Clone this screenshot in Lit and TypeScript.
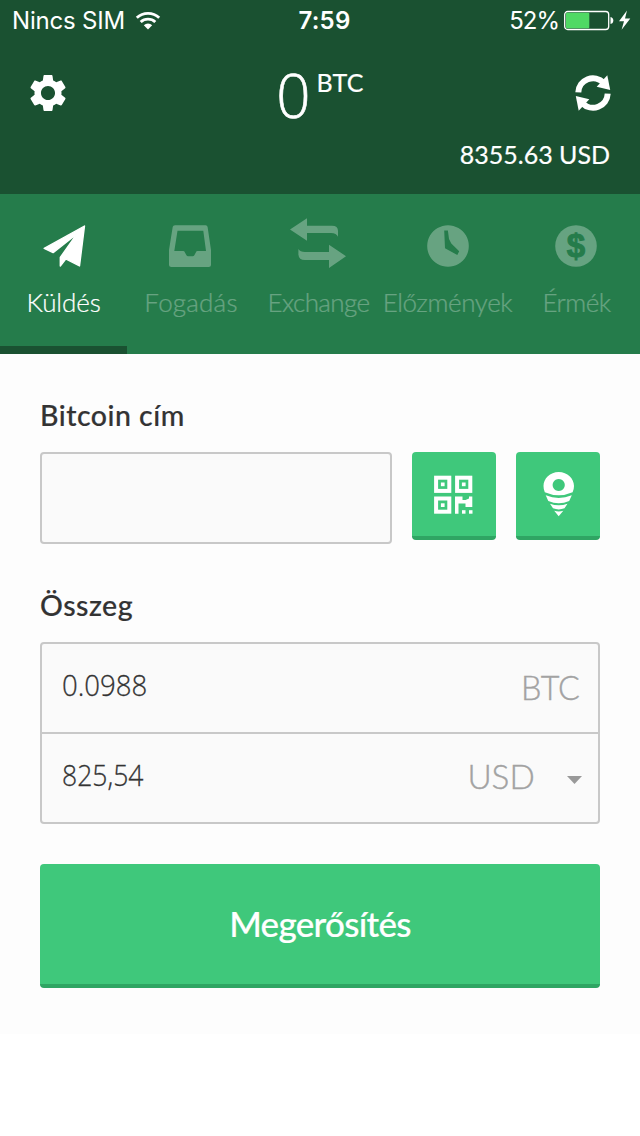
import { LitElement, html, svg, css } from "lit";
import { customElement, property, state } from "lit/decorators.js";
import { classMap } from "lit/directives/class-map.js";

const planeIcon = svg`<g stroke-width="1.4" stroke-linejoin="round">
  <path class="line" d="M84 226 L43.7 248.4 L52.6 252.6 L76.6 233.6 L59.8 257.4 V266 L65.2 259 L79 266 Z"/></g>`;

const inboxIcon = svg`<path fill-rule="evenodd" d="M175 225.3 H205.6 Q207.3 225.3 207.6 227 L211 250 V264.5 Q211 267 208.500 267 H171.500 Q169 267 169 264.500 V250 L172.700 227 Q173 225.300 175 225.300 Z M177.500 230.700 L174.300 250.900 H183 L184.200 251.300 L186.600 255.400 Q187 256.200 188 256.200 H192.800 Q193.700 256.200 194.200 255.400 L196.500 251.300 L197.700 250.900 H206 L203.300 230.700 Z"/>`;

const exchangeIcon = svg`<path d="M290 229.400 L307 218.200 V225.700 H332 Q338 225.700 338 231 V236.800 Q336.500 233 331 233 H307 V240.700 Z"/>
  <path d="M346 256.200 L329 244.700 V252 H305 Q300 252 298.400 249 V254.500 Q298.800 260 305 260 H329 V268 Z"/>`;

const clockIcon = svg`<path fill-rule="evenodd" d="M448 225.200 a20.800 20.800 0 1 0 .01 0 Z M444.200 230.600 H447.900 L449 239 L451.300 243.600 L459.200 251.300 L457.300 254.900 L445 248.200 Z"/>`;

const coinIcon = svg`<circle cx="576" cy="246" r="20.8"/>
  <text class="dollar" x="576" y="257" text-anchor="middle">$</text>`;

const tabs = [
  { label: "Küldés", x: 33.5, space: -0.1, icon: planeIcon },
  { label: "Fogadás", x: 161, space: 0.2, icon: inboxIcon },
  { label: "Exchange", x: 289, space: -0.6, icon: exchangeIcon },
  { label: "Előzmények", x: 418, space: -0.4, icon: clockIcon },
  { label: "Érmék", x: 547, space: -0.5, icon: coinIcon },
];

@customElement("status-bar")
class StatusBar extends LitElement {
  static styles = css`
    :host { display: flex; height: 41px; line-height: 41px; padding: 0 8px 0 12px; font-family: Inter, sans-serif; font-size: 24px; color: #fff; }
    .side { flex: 1; display: flex; align-items: center; }
    .end { justify-content: flex-end; }
    .carrier { letter-spacing: -0.200px; }
    .time { font-weight: 600; padding-left: 5px; letter-spacing: 0.200px; }
    .percent { letter-spacing: -1px; margin-right: 5px; }
    .wifi { margin-left: 10px; }
    svg { display: block; flex: none; }
  `;
  render() {
    return html`
      <div class="side"><span class="carrier">Nincs SIM</span>
        <svg class="wifi" width="26" height="20" viewBox="0 0 26 20" fill="none" stroke="#fff" stroke-width="2.900">
          <path d="M1.800 6.800 A16.500 16.500 0 0 1 24.200 6.800"/>
          <path d="M5.700 11 A10.700 10.700 0 0 1 20.300 11"/>
          <path d="M13 18.600 L8.800 14.200 A6 6 0 0 1 17.200 14.200 Z" fill="#fff" stroke="none"/>
        </svg>
      </div>
      <div class="time">7:59</div>
      <div class="side end"><span class="percent">52%</span>
        <svg width="68" height="22" viewBox="0 0 68 22">
          <rect x="0.700" y="1.500" width="44" height="18" rx="3" fill="none" stroke="#fff" stroke-width="1.300"/>
          <rect x="2" y="2.800" width="23.300" height="15.400" rx="1" fill="#4fd964"/>
          <path d="M46.500 7 Q49.300 7.500 49.300 10.500 Q49.300 13.500 46.500 14 Z" fill="#fff"/>
          <path d="M63 0.500 L55 11.300 H60 L57.600 19.800 L66.300 8.600 H61 Z" fill="#fff"/>
        </svg>
      </div>`;
  }
}

@customElement("wallet-header")
class WalletHeader extends LitElement {
  static styles = css`
    :host { display: block; height: 194px; background: #1a5131; color: #fff; font-family: Lato, sans-serif; }
    .row { display: flex; align-items: flex-start; height: 98px; box-sizing: border-box; padding: 24px 27px 0 28px; }
    .icon { display: block; width: 40px; height: 40px; margin-top: 8px; fill: #fff; }
    .balance { flex: 1; display: flex; justify-content: center; gap: 6px; }
    .amount { font: 300 60px/60px "Open Sans", sans-serif; -webkit-text-stroke: 0.600px #fff; margin-left: -1px; }
    .unit { font-size: 25px; line-height: 30px; margin-top: 2px; letter-spacing: 0.300px; -webkit-text-stroke: 0.200px #fff; }
    .fiat { font-size: 25px; line-height: 30px; text-align: right; padding-right: 30px; -webkit-text-stroke: 0.200px #fff; }
    .arc { fill: none; stroke: #fff; stroke-width: 6; }
  `;
  render() {
    const arrow = svg`<path class="arc" d="M-14.700 -0.700 A14.700 14.700 0 0 1 10.500 -10.300"/>
      <path d="M14.300 -17.700 L17.200 -3 L3.700 -6.300 Z"/>`;
    return html`
      <status-bar></status-bar>
      <div class="row">
        <svg class="icon" viewBox="0 0 40 40"><path transform="translate(20 20) scale(1.8) translate(-12 -12)" d="M19.430 12.980c.04-.32.07-.64.07-.98s-.03-.66-.07-.98l2.110-1.650c.19-.15.24-.42.12-.64l-2-3.460c-.12-.22-.39-.3-.61-.22l-2.490 1c-.52-.4-1.080-.73-1.690-.98l-.38-2.650C14.460 2.180 14.250 2 14 2h-4c-.25 0-.46.18-.49.42l-.38 2.650c-.61.25-1.170.59-1.690.98l-2.490-1c-.23-.09-.49 0-.61.22l-2 3.460c-.13.22-.07.49.12.64l2.110 1.650c-.04.32-.07.65-.07.98s.03.66.07.98l-2.110 1.650c-.19.15-.24.42-.12.64l2 3.460c.12.22.39.3.61.22l2.490-1c.52.4 1.080.73 1.690.98l.38 2.650c.03.24.24.42.49.42h4c.25 0 .46-.18.49-.42l.38-2.650c.61-.25 1.170-.59 1.690-.98l2.490 1c.23.09.49 0 .61-.22l2-3.460c.12-.22.07-.49-.12-.64l-2.110-1.650zM12 15.900c-2.150 0-3.900-1.750-3.900-3.900s1.750-3.900 3.900-3.900 3.900 1.750 3.900 3.900-1.750 3.900-3.900 3.900z"/></svg>
        <div class="balance"><span class="amount">0</span><span class="unit">BTC</span></div>
        <svg class="icon" viewBox="-20 -20 40 40"><g>${arrow}</g><g transform="rotate(180)">${arrow}</g></svg>
      </div>
      <div class="fiat">8355.63 USD</div>`;
  }
}

@customElement("tab-bar")
class TabBar extends LitElement {
  @state() private active = 0;
  static styles = css`
    :host { display: grid; grid-template-columns: 127px 128px 127px 131px 127px; height: 160px; background: #257c4b; }
    .tab { display: flex; flex-direction: column; align-items: center; box-sizing: border-box; padding-top: 22px; border-bottom: 8px solid transparent; cursor: pointer; }
    .tab.active { border-color: #1a5131; }
    svg { display: block; flex: none; width: 60px; height: 56px; fill: #fff; stroke: none; opacity: 0.3; }
    .line { stroke: #fff; }
    .label { margin-top: 13px; font: 300 26px/34px Lato, sans-serif; color: #fff; white-space: nowrap; opacity: 0.3; -webkit-text-stroke: 0.200px #fff; }
    .active svg, .active .label { opacity: 1; }
    .dollar { font: 700 33px "Liberation Sans", sans-serif; fill: #257c4b; stroke: #257c4b; stroke-width: 1; }
    .tab:last-child svg { opacity: 1; }
    .tab:last-child circle { fill: #66a381; }
  `;
  render() {
    return tabs.map((t, i) => html`
      <div class=${classMap({ tab: true, active: i === this.active })} @click=${() => (this.active = i)}>
        <svg viewBox="${t.x} 216 60 56">${t.icon}</svg>
        <span class="label" style="letter-spacing:${t.space}px">${t.label}</span>
      </div>`);
  }
}

@customElement("send-form")
class SendForm extends LitElement {
  @property() address = "";
  static styles = css`
    :host { display: block; box-sizing: border-box; height: 680px; padding: 44px 40px 0; background: #fdfdfd; color: #333; font-family: Lato, sans-serif; }
    .label { font-size: 28.500px; line-height: 34px; font-weight: 500; letter-spacing: 0.500px; margin-bottom: 20px; -webkit-text-stroke: 0.200px #333; }
    .address { display: flex; gap: 20px; align-items: flex-start; margin-bottom: 44px; }
    .field { flex: 1; height: 92px; box-sizing: border-box; border: 2px solid #c8c8c8; border-radius: 4px; background: #fafafa; }
    .key { display: block; width: 84px; height: 88px; box-sizing: border-box; padding: 0; border: 0; border-bottom: 4px solid #2fa563; border-radius: 4px; background: #3fc87b; }
    .key svg { display: block; width: 84px; height: 84px; fill: #fff; }
    .amounts { border: 2px solid #c8c8c8; border-radius: 4px; background: #fafafa; }
    .row { display: flex; align-items: center; justify-content: space-between; height: 88px; padding: 0 18px 0 20px; }
    .row + .row { border-top: 2px solid #c8c8c8; }
    .value { margin-right: auto; font: 300 30px/36px "Open Sans", sans-serif; padding-bottom: 6px; -webkit-text-stroke: 0.300px #333; transform: scaleX(0.92); transform-origin: left; }
    .value.fiat { transform: scaleX(0.885); }
    .unit { font-size: 34px; line-height: 40px; font-weight: 300; color: #a2a2a2; padding-bottom: 3px; -webkit-text-stroke: 0.400px #a2a2a2; transform: scaleX(0.95); transform-origin: right; }
    .unit.fiat { padding-bottom: 4px; transform: scaleX(0.98); }
    .caret { width: 15px; height: 8px; margin: 4px -2px 0 32px; fill: #999; }
    .submit { display: block; width: 100%; height: 124px; box-sizing: border-box; margin-top: 40px; padding: 0 0 2px; border: 0; border-bottom: 4px solid #2fa563; border-radius: 4px; background: #3fc87b; color: #fff; font: 500 35px/42px Lato, sans-serif; letter-spacing: -0.700px; -webkit-text-stroke: 0.200px #fff; }
    .outline { fill: none; stroke: #fff; stroke-width: 4; }
  `;
  render() {
    return html`
      <div class="label">Bitcoin cím</div>
      <div class="address">
        <div class="field">${this.address}</div>
        <button class="key" aria-label="QR"><svg viewBox="412 452 84 84">
          <rect class="outline" x="436.100" y="477.700" width="13.200" height="13.200"/>
          <rect class="outline" x="457.100" y="477.700" width="13.200" height="13.200"/>
          <rect class="outline" x="436.100" y="498.500" width="13.200" height="13.200"/>
          <rect x="440.900" y="482.500" width="3.700" height="3.700"/>
          <rect x="461.900" y="482.500" width="3.700" height="3.700"/>
          <rect x="440.900" y="503.300" width="3.700" height="3.700"/>
          <path d="M455 496.500 H462.500 V500 H465.500 L469 498.500 V496.500 H472.300 V507 H465.500 V503.500 H458.500 V513.700 H455 Z"/>
          <rect x="462" y="510.200" width="3.500" height="3.500"/>
          <rect x="469" y="510.200" width="3.500" height="3.500"/>
        </svg></button>
        <button class="key" aria-label="Pin"><svg viewBox="516 452 84 84">
          <path fill-rule="evenodd" d="M558.700 472 C567.500 472 574 478.500 574 486 Q574 489.500 572.600 492.300 Q558.700 498.300 544.800 492.300 Q543.500 489.500 543.500 486 C543.500 478.500 550 472 558.700 472 Z M558.700 478.900 a6.100 6.100 0 1 0 .01 0 Z"/>
          <path d="M545.700 495.300 Q558.700 500.500 571.800 495.300 L569.200 501 Q558.700 505.500 548.300 501 Z"/>
          <path d="M550 503.700 Q558.700 506.800 567.500 503.700 L564.500 508.300 Q558.700 510.600 553 508.300 Z"/>
          <path d="M554.200 510.700 Q558.700 512.300 563.300 510.700 L558.700 516.300 Z"/>
        </svg></button>
      </div>
      <div class="label">Összeg</div>
      <div class="amounts">
        <div class="row"><span class="value">0.0988</span><span class="unit">BTC</span></div>
        <div class="row"><span class="value fiat">825,54</span><span class="unit fiat">USD</span>
          <svg class="caret" viewBox="0 0 15 8"><path d="M0 0 H15 L7.500 8 Z"/></svg></div>
      </div>
      <button class="submit">Megerősítés</button>`;
  }
}

@customElement("app-root")
class AppRoot extends LitElement {
  static styles = css`:host { display: block; min-height: 1136px; background: #fff; }`;
  render() {
    return html`<wallet-header></wallet-header><tab-bar></tab-bar><send-form></send-form>`;
  }
}
